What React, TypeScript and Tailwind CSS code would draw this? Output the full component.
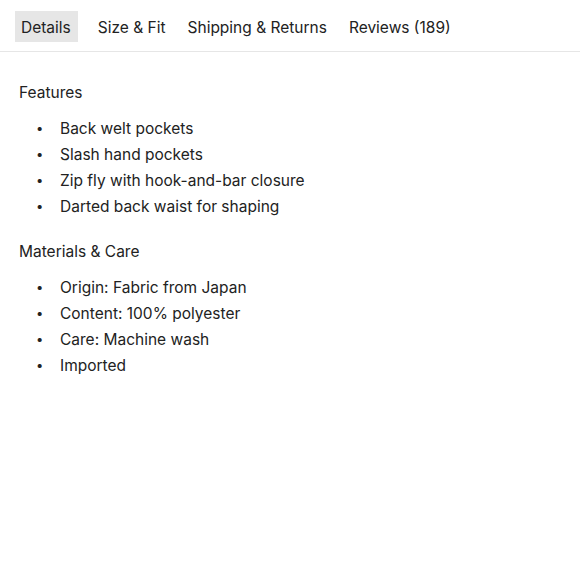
import React from "react";

const tabs = ["Details", "Size & Fit", "Shipping & Returns", "Reviews (189)"];
const sections = [
  {
    title: "Features",
    items: [
      "Back welt pockets",
      "Slash hand pockets",
      "Zip fly with hook-and-bar closure",
      "Darted back waist for shaping",
    ],
  },
  {
    title: "Materials & Care",
    items: [
      "Origin: Fabric from Japan",
      "Content: 100% polyester",
      "Care: Machine wash",
      "Imported",
    ],
  },
];

export default function App() {
  return (
    <div className="w-[580px] h-[580px] bg-white text-[#222] text-[15.5px] font-['Inter','Noto_Sans',sans-serif]">
      <div className="flex gap-[10px] pl-[15px] pt-[11px] pb-[9px] border-b border-[#e6e6e6]">
        {tabs.map((t, i) => (
          <div
            key={t}
            className={`h-[31px] px-[6px] pt-[2px] flex items-center leading-none ${i === 0 ? "bg-[#e6e6e6] pr-[7px]" : ""} ${i === 1 ? "ml-[4px]" : ""}`}
          >
            {t}
          </div>
        ))}
      </div>
      <div className="px-[19px] pt-[29px] flex flex-col gap-[20px]">
        {sections.map((s) => (
          <div key={s.title}>
            <div className="leading-[24px]">{s.title}</div>
            <ul className="mt-[11px] flex flex-col">
              {s.items.map((it) => (
                <li key={it} className="flex items-center h-[26px]">
                  <span className="w-[41px] pl-[17px] text-[13px]">•</span>
                  <span>{it}</span>
                </li>
              ))}
            </ul>
          </div>
        ))}
      </div>
    </div>
  );
}
